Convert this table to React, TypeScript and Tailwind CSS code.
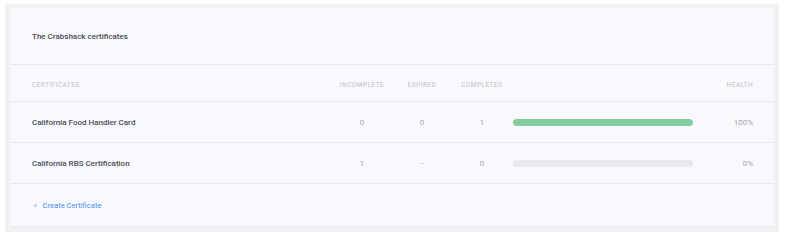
import React from "react";

const rows = [
  { name: "California Food Handler Card", incomplete: "0", expired: "0", completed: "1", pct: 100 },
  { name: "California RBS Certification", incomplete: "1", expired: "-", completed: "0", pct: 0 },
];

export default function App() {
  return (
    <div className="w-[788px] h-[245px] bg-white pt-[4px] pl-[5px]" style={{ fontFamily: "Roboto, 'Liberation Sans', sans-serif" }}>
      <div className="w-[774px] h-[228px] bg-[#f1f2f6] pt-[4px] pl-[6px]">
        <div className="w-[763px] bg-[#f8f9fd] border-b border-[#e7e9ef]">
          <div className="h-[57px] flex items-center pl-[21px] pt-[1px] border-b border-[#e7e9ef]">
            <span className="text-[8px] font-medium text-[#4a4b55]">The Crabshack certificates</span>
          </div>
          <div className="h-[37px] flex items-center px-[21px] pt-[5px] border-b border-[#e7e9ef] text-[6.5px] tracking-[0.07em] text-[#bfc2ca] uppercase">
            <div className="w-[300px]">Certificates</div>
            <div className="w-[60px] text-center">Incomplete</div>
            <div className="w-[60px] text-center">Expired</div>
            <div className="w-[60px] text-center">Completed</div>
            <div className="w-[181px]"></div>
            <div className="w-[60px] text-right">Health</div>
          </div>
          {rows.map((r) => (
            <div key={r.name} className="h-[41px] flex items-center px-[21px] pt-[1px] border-b border-[#e7e9ef] text-[8px] text-[#a3a6ae]">
              <div className="w-[300px] text-[8px] font-medium text-[#4a4b55]">{r.name}</div>
              <div className="w-[60px] text-center">{r.incomplete}</div>
              <div className="w-[60px] text-center">{r.expired}</div>
              <div className="w-[60px] text-center">{r.completed}</div>
              <div className="w-[181px] pl-[1px]">
                <div className="w-[180px] h-[7px] rounded-full bg-[#e8e9ed] overflow-hidden">
                  <div className="h-full rounded-full bg-[#82cc9d]" style={{ width: `${r.pct}%` }} />
                </div>
              </div>
              <div className="w-[60px] text-right">{r.pct}%</div>
            </div>
          ))}
          <div className="h-[42px] flex items-center pl-[22px] pt-[1px] text-[7.6px] text-[#4b8ef0]">
            <span className="text-[8px] mr-[5px] text-[#8bb4f4]">+</span>
            <span>Create Certificate</span>
          </div>
        </div>
      </div>
    </div>
  );
}
